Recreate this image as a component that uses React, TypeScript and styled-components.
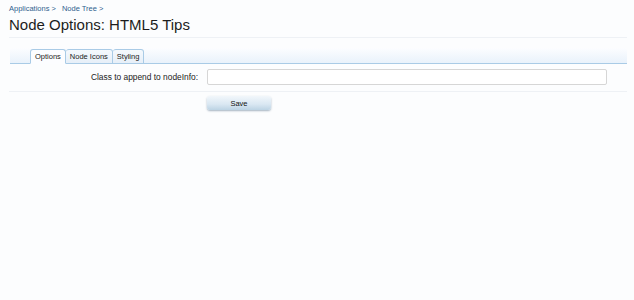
import React from "react";
import styled, { createGlobalStyle } from "styled-components";

const GlobalStyle = createGlobalStyle`
  html, body {
    margin: 0;
    padding: 0;
    background: #fcfdfe;
  }
  body {
    font-family: "Liberation Sans", Arial, sans-serif;
    color: #222;
  }
`;

const tabs = ["Options", "Node Icons", "Styling"];

const App = () => {
  return (
    <>
      <GlobalStyle />
      <Page>
        <Breadcrumb>
          <Crumb href="#">Applications</Crumb>
          <Crumb href="#">Node Tree</Crumb>
        </Breadcrumb>
        <Title>Node Options: HTML5 Tips</Title>

        <TabBar>
          {tabs.map((tab, i) => (
            <Tab key={tab} $active={i === 0}>
              {tab}
            </Tab>
          ))}
        </TabBar>

        <FormRow>
          <Label htmlFor="nodeClass">Class to append to nodeInfo:</Label>
          <TextInput id="nodeClass" type="text" />
        </FormRow>

        <SubmitRow>
          <SaveButton type="button">Save</SaveButton>
        </SubmitRow>
      </Page>
    </>
  );
};

export default App;

const Page = styled.div`
  padding: 4px 7px 0 9px;
  min-height: 300px;
  box-sizing: border-box;
`;

const Breadcrumb = styled.div`
  display: flex;
  gap: 6px;
  font-size: 7.5px;
  line-height: 9px;
`;

const Crumb = styled.a`
  color: #2f5f8e;
  text-decoration: none;

  &::after {
    content: " >";
    color: #2f5f8e;
  }
`;

const Title = styled.h1`
  margin: 2px 0 0;
  padding-bottom: 2px;
  font-size: 15px;
  font-weight: normal;
  line-height: 20px;
  color: #1d1d1d;
  border-bottom: 1px solid #eef1f5;
`;

const TabBar = styled.div`
  display: flex;
  align-items: flex-end;
  margin: 10px 0 0 1px;
  padding-left: 20px;
  height: 15px;
  background: linear-gradient(to bottom, #fcfdff 0%, #e9f2fb 100%);
  border-bottom: 1px solid #a9cbe6;
  border-radius: 3px 3px 0 0;
`;

const Tab = styled.div<{ $active?: boolean }>`
  height: 13px;
  padding: 0 4px;
  margin-bottom: -1px;
  font-size: 7.5px;
  line-height: 14px;
  color: #222;
  background: ${(p) => (p.$active ? "#fcfdff" : "linear-gradient(to bottom, #f5f9fd, #e6eff8)")};
  border: 1px solid #a9cbe6;
  border-bottom-color: ${(p) => (p.$active ? "#fcfdff" : "#a9cbe6")};
  border-left-width: ${(p) => (p.$active ? "1px" : "0")};
  border-radius: 3px 3px 0 0;
`;

const FormRow = styled.div`
  display: grid;
  grid-template-columns: 189px 400px;
  column-gap: 9px;
  align-items: center;
  padding: 5px 0 6px;
  border-bottom: 1px solid #eef1f5;
`;

const Label = styled.label`
  text-align: right;
  font-size: 8.4px;
  color: #222;
`;

const TextInput = styled.input`
  display: block;
  height: 16px;
  box-sizing: border-box;
  border: 1px solid #d6d6d6;
  border-radius: 2px;
  background: #fff;
  padding: 0 4px;
  font-size: 8px;
  outline: none;
`;

const SubmitRow = styled.div`
  display: flex;
  padding: 4px 0 0 198px;
`;

const SaveButton = styled.button`
  width: 64px;
  height: 14px;
  padding: 0;
  border: none;
  border-radius: 3px;
  font-family: "Liberation Sans", Arial, sans-serif;
  font-size: 7.5px;
  color: #111;
  background: linear-gradient(to bottom, #f2f7fb 0%, #d9e7f2 60%, #bcd3e4 100%);
  box-shadow: 0 1px 2px rgba(60, 90, 120, 0.45);
  cursor: pointer;
`;
